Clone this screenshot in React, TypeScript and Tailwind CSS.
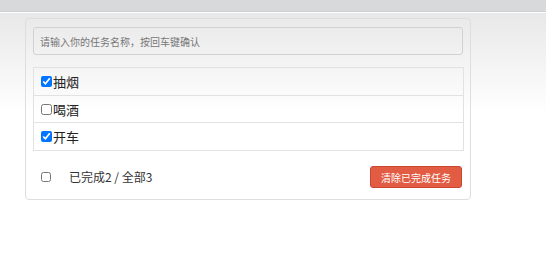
import React from "react";

const font = { fontFamily: '"Noto Sans CJK SC", "Noto Sans", sans-serif' };

function Row({ label, checked, last, h }: { label: string; checked: boolean; last?: boolean; h: string }) {
  return (
    <div className={`flex items-center ${h} pl-[7px] ${last ? "" : "border-b border-[#e2e2e2]"}`}>
      <input type="checkbox" defaultChecked={checked} className="w-[11px] h-[11px] m-0 mr-[1px]" />
      <span className="text-[13px] text-[#222] leading-none">{label}</span>
    </div>
  );
}

export default function App() {
  return (
    <div className="w-[546px] h-[261px] bg-white overflow-hidden" style={font}>
      <div className="h-[12px] bg-[#d8d9da] border-b border-[#cfcfcf]" />
      <div className="bg-gradient-to-b from-[#e8e8e8] to-white h-[100px] absolute left-0 right-0 top-[13px]" style={{ zIndex: 0 }} />
      <div className="relative pl-[25px] pt-[6px]">
        <div className="w-[446px] h-[182px] border border-[#dedede] rounded-[4px] px-[7px] pt-[8px]">
          <div className="h-[28px] border border-[#d2d2d2] rounded-[3px] flex items-center pl-[6px]">
            <span className="text-[10px] text-[#777]">请输入你的任务名称，按回车键确认</span>
          </div>
          <div className="mt-[12px] border border-[#e2e2e2] w-[431px]">
            <Row label="抽烟" checked h="h-[28px]" />
            <Row label="喝酒" checked={false} h="h-[27px]" />
            <Row label="开车" checked last h="h-[27px]" />
          </div>
          <div className="mt-[15px] flex items-center h-[22px] pl-[8px] pr-[1px]">
            <input type="checkbox" className="w-[10px] h-[10px] m-0" />
            <span className="ml-[18px] text-[12px] text-[#333]">已完成2 / 全部3</span>
            <div className="flex-1" />
            <button className="h-[22px] w-[92px] bg-[#e25c43] border border-[#c9452e] rounded-[3px] text-white text-[10px] flex items-center justify-center">
              清除已完成任务
            </button>
          </div>
        </div>
      </div>
    </div>
  );
}
